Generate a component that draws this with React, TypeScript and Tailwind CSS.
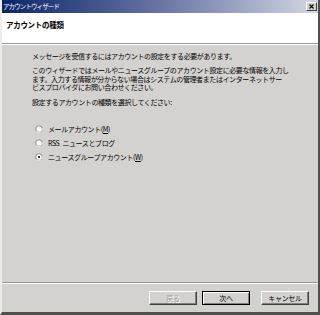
import React from "react";

const FONT = "[font-family:'Noto_Sans_CJK_JP','Noto_Sans',sans-serif]";

function Radio({ checked }: { checked?: boolean }) {
  return (
    <svg width="8" height="8" viewBox="0 0 8 8" className="shrink-0">
      <circle cx="4" cy="4" r="3.6" fill="#808080" />
      <path d="M7.2 3.2 A3.6 3.6 0 0 1 1.4 6.6" stroke="#ffffff" strokeWidth="0.9" fill="none" />
      <circle cx="4" cy="4" r="2.7" fill="#ffffff" />
      {checked && <circle cx="4" cy="4" r="1.1" fill="#000000" />}
    </svg>
  );
}

function Button({
  children,
  disabled,
  isDefault,
}: {
  children: React.ReactNode;
  disabled?: boolean;
  isDefault?: boolean;
}) {
  return (
    <div
      className={
        "w-[48px] h-[14px] flex items-center justify-center bg-[#d4d2ce] text-[7px] leading-none tracking-[-0.3px] " +
        (isDefault
          ? "border border-black shadow-[inset_1px_1px_0_#ffffff,inset_-1px_-1px_0_#808080]"
          : "border border-t-white border-l-white border-r-[#404040] border-b-[#404040] shadow-[inset_-1px_-1px_0_#808080]") +
        (disabled ? " text-[#a0a0a0] [text-shadow:1px_1px_0_#ffffff]" : " text-black")
      }
    >
      {children}
    </div>
  );
}

export default function App() {
  return (
    <div
      className={`w-[320px] h-[315px] flex flex-col bg-[#d4d2ce] border-l-2 border-l-[#ececec] border-r-2 border-r-[#505050] border-b-[3px] border-b-[#505050] overflow-hidden ${FONT}`}
    >
      {/* title bar */}
      <div className="h-[13px] shrink-0 flex items-center justify-between bg-gradient-to-r from-[#0a246a] via-[#6a74a4] to-[#d4d8e2] pl-[1px] pr-[1px]">
        <span className="text-white text-[6.5px] leading-none tracking-[-0.9px]">
          アカウントウィザード
        </span>
        <div className="w-[11px] h-[9px] bg-[#d4d2ce] border border-t-white border-l-white border-r-[#404040] border-b-[#404040] flex items-center justify-center">
          <svg width="5" height="5" viewBox="0 0 5 5">
            <path d="M0.5 0.5 L4.5 4.5 M4.5 0.5 L0.5 4.5" stroke="#000" strokeWidth="1.1" />
          </svg>
        </div>
      </div>

      {/* header */}
      <div className="h-[30px] shrink-0 bg-white pl-[4px] pt-[7px]">
        <div className="text-[7.5px] leading-[9px] font-bold tracking-[-0.3px] text-black">
          アカウントの種類
        </div>
      </div>
      <div className="h-[2px] shrink-0 border-t border-t-[#9a9a9a] border-b border-b-white" />

      {/* body */}
      <div className="flex-1 pl-[30px] pt-[7px] text-[7px] leading-[8.5px] tracking-[-0.4px] text-black whitespace-nowrap">
        <p>メッセージを受信するにはアカウントの設定をする必要があります。</p>
        <p className="mt-[5.5px]">
          このウィザードではメールやニュースグループのアカウント設定に必要な情報を入力し
          <br />
          ます。入力する情報が分からない場合はシステムの管理者またはインターネットサー
          <br />
          ビスプロバイダにお問い合わせください。
        </p>
        <p className="mt-[6.5px]">設定するアカウントの種類を選択してください:</p>

        <div className="mt-[15.75px] flex flex-col pl-[3px]">
          <label className="h-[14px] flex items-center gap-[5px]">
            <Radio />
            <span>
              メールアカウント(<span className="underline">M</span>)
            </span>
          </label>
          <label className="h-[14px] flex items-center gap-[5px]">
            <Radio />
            <span>
              RSS<span className="inline-block w-[3px]" />ニュースとブログ
            </span>
          </label>
          <label className="h-[14px] flex items-center gap-[5px]">
            <Radio checked />
            <span>
              ニュースグループアカウント(<span className="underline">W</span>)
            </span>
          </label>
        </div>
      </div>

      {/* footer */}
      <div className="h-[2px] shrink-0 border-t border-t-[#9a9a9a] border-b border-b-white" />
      <div className="h-[28px] shrink-0 flex items-center justify-end pr-[9px]">
        <Button disabled>戻る</Button>
        <div className="w-[5px]" />
        <Button isDefault>次へ</Button>
        <div className="w-[11px]" />
        <Button>キャンセル</Button>
      </div>
    </div>
  );
}
